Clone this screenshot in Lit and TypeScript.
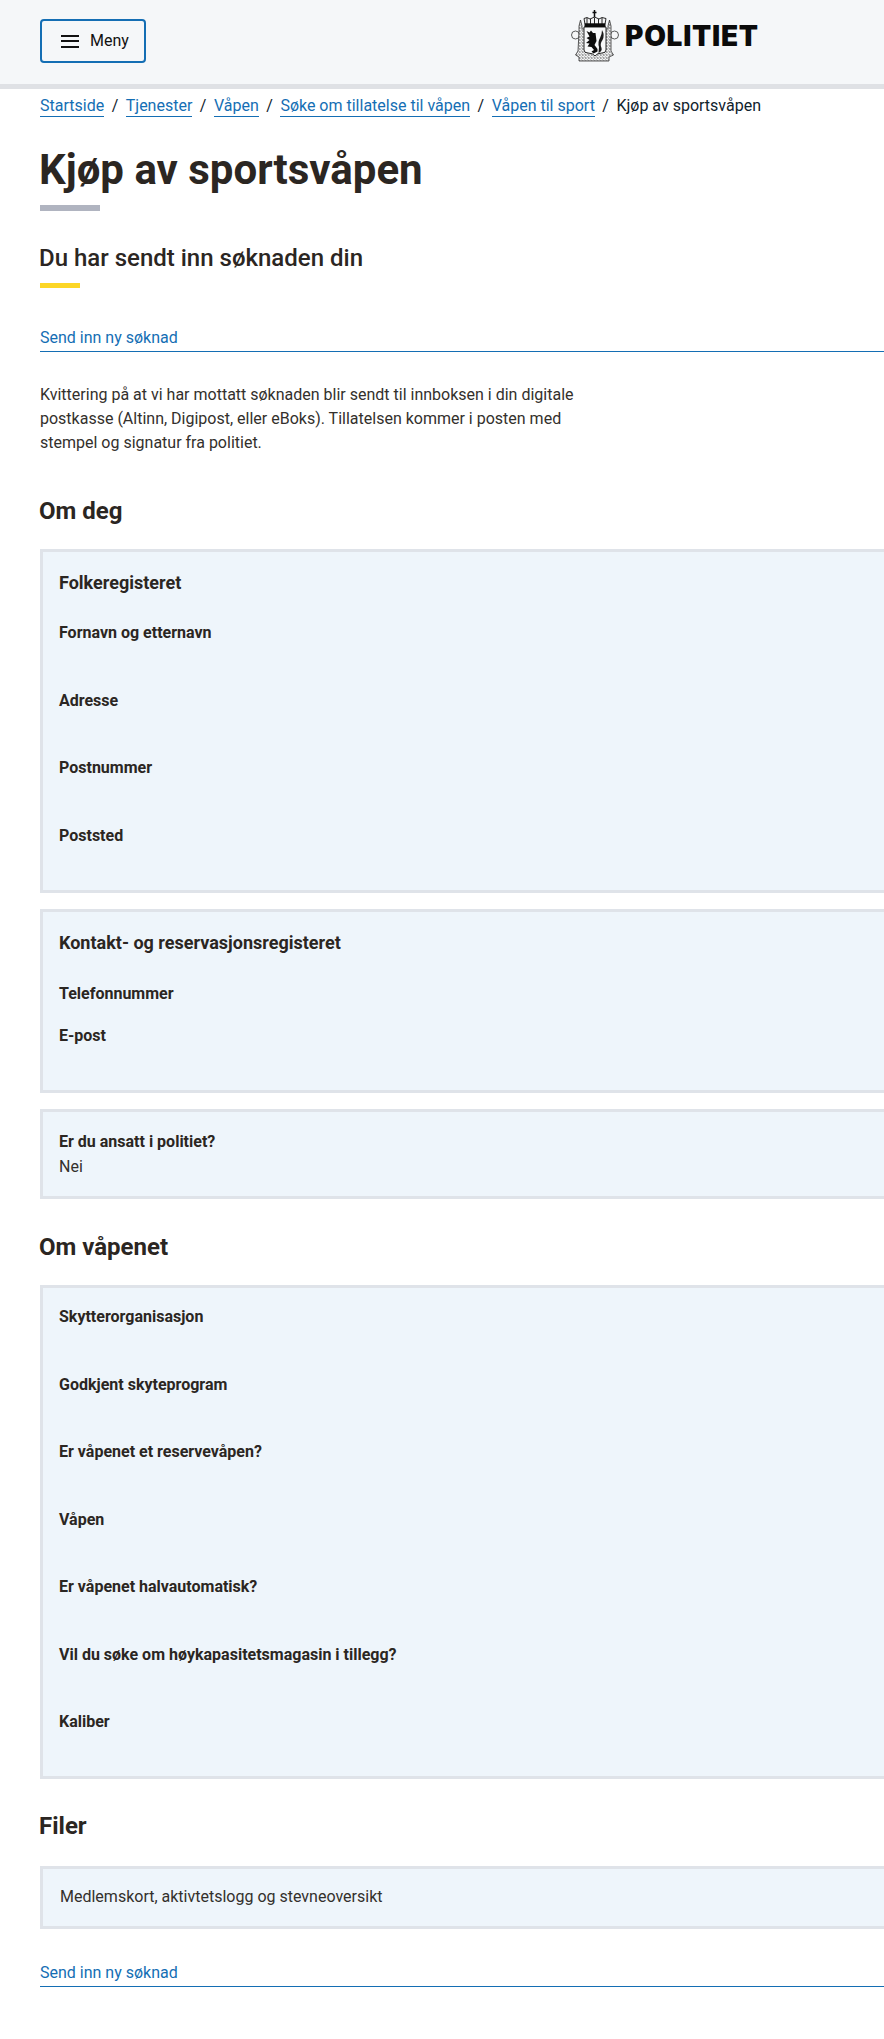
import { LitElement, html, css, svg } from "lit";
import { customElement } from "lit/decorators.js";

const crest = svg`<svg class="crest" viewBox="0 0 60 62" width="60" height="62" aria-hidden="true">
  <defs>
    <pattern id="lace" width="3" height="3" patternUnits="userSpaceOnUse">
      <rect width="3" height="3" fill="#f0f1f2"/>
      <path d="M0 1.5 Q0.8 0 1.5 1.5 T3 1.5 M1.5 3 V2.2" stroke="#444" stroke-width="0.55" fill="none"/>
    </pattern>
  </defs>
  <circle cx="9.5" cy="30" r="4" fill="#f6f7f8" stroke="#333" stroke-width="0.8"/>
  <circle cx="48.5" cy="30" r="4" fill="#f6f7f8" stroke="#333" stroke-width="0.8"/>
  <path d="M13 27 L13 21 L14.5 15 L16 21 L16 24 L42 24 L42 21 L43.5 15 L45 21 L45 27 L45 46 L47.5 50 L43 52 L43 56 L13 56 L13 52 L9.5 50 L12 46 Z" fill="url(#lace)" stroke="#333" stroke-width="0.8"/>
  <path d="M18 22 H40 V45 Q40 48 36 48 Q31 48 29 51 Q27 48 22 48 Q18 48 18 45 Z" fill="#f8f9fa" stroke="#111" stroke-width="0.9"/>
  <path d="M20.5 26 L23.5 27.5 L25 25.5 L27 28 L29.5 28 L30.5 36 L28.5 40 L31.5 44 L31.5 46.5 L27.5 48.5 L25.5 46.5 L28 45 L25.5 42 L21.5 41.5 L23.5 38.5 L20 38 L23.5 35 L20.5 33 L23.5 31.5 Z" fill="#0c0c0c"/>
  <path d="M36 25 Q39 30 36.5 35 Q33.5 39 35.5 43 Q36.5 46 32.5 48 L33 42 Q31.5 37 34 33 Q36 29 36 25 Z" fill="#1a1a1a"/>
  <path d="M18 13.5 L21 12.5 L24 14 L28.5 12 L33 14 L36 12.5 L40 13.5 L39 19 L19 19 Z" fill="#f2f3f4" stroke="#111" stroke-width="0.9"/>
  <path d="M18.5 18.5 H39.5 V22 H18.5 Z" fill="#0c0c0c"/>
  <path d="M21 13 V19 M24.5 14 V19 M28.5 12.5 V19 M32.5 14 V19 M36 13 V19" stroke="#111" stroke-width="0.9"/>
  <path d="M28.5 5 V12 M26.5 7.5 H30.5" stroke="#0c0c0c" stroke-width="1.5"/>
</svg>`;

@customElement("app-root")
export class AppRoot extends LitElement {
  static styles = css`
    :host { display: block; overflow: hidden; font-family: Roboto, "Liberation Sans", sans-serif; color: #33302c; background: #fff; min-height: 2039px; font-size: 16px; line-height: 24px; }
    * { box-sizing: border-box; }
    header { height: 89px; background: #f5f7f9; border-bottom: 5px solid #dfe1e5; padding: 19px 40px 0; display: flex; }
    .menu { width: 106px; height: 44px; border: 2px solid #146eb4; border-radius: 4px; display: flex; align-items: center; padding-left: 19px; gap: 11px; color: #111; font-size: 16px; }
    .burger { width: 18px; height: 13px; border-top: 2px solid #111; border-bottom: 2px solid #111; position: relative; }
    .burger::after { content: ""; position: absolute; left: 0; right: 0; top: 3.5px; height: 2px; background: #111; }
    .logo { display: flex; align-items: center; gap: 0; margin-left: 420px; margin-top: -14px; height: 62px; }
    .crest { flex: none; }
    .wordmark { font-family: Inter, Roboto, sans-serif; font-weight: 900; font-size: 28px; letter-spacing: 0.75px; color: #0b0b0b; line-height: 30px; margin-left: -1px; }
    main { width: 900px; padding: 7px 0 0 40px; }
    .crumbs { display: flex; align-items: flex-start; height: 24px; white-space: nowrap; color: #10222c; line-height: 20px; }
    .crumbs a { color: #146eb4; text-decoration: none; border-bottom: 1px solid #146eb4; line-height: 20px; height: 21px; }
    .crumbs span.sep { margin: 0 7.5px; }
    h1 { margin: 25px 0 0 -1px; font-size: 42px; line-height: 50px; font-weight: 700; color: #2b2622; }
    .bar1 { width: 60px; height: 6px; background: #b0b4c0; margin-top: 10px; }
    h2 { color: #2b2622; }
    h2.sent { margin: 31px 0 0 -1px; font-size: 24px; line-height: 32px; font-weight: 500; }
    .bar2 { width: 40px; height: 5px; background: #fcd626; margin-top: 9px; }
    .newlink { display: block; color: #146eb4; border-bottom: 1px solid #146eb4; text-decoration: none; height: 26px; line-height: 24px; }
    .first { margin-top: 38px; }
    p { margin: 31px 0 0; width: 540px; }
    h2.sec { margin: 0 0 0 -1px; font-size: 24px; line-height: 32px; font-weight: 700; }
    .card { background: #eef5fb; border: 3px solid #dfe3e9; padding: 17px 16px 0; }
    h3 { margin: 0; font-size: 18px; line-height: 24px; font-weight: 700; color: #2b2622; }
    .label { font-weight: 700; line-height: 24px; color: #2b2622; }
    .row { height: 67.5px; }
    .row.short { height: 42px; }
    .c1 { margin-top: 22px; height: 344px; padding-top: 19px; }
    .c1 h3 { margin-bottom: 26px; }
    .c2 { margin-top: 16px; height: 184px; padding-top: 19px; }
    .c2 h3 { margin-bottom: 27px; }
    .c3 { margin-top: 16px; height: 90px; padding-top: 18px; }
    .nei { margin-top: 1px; }
    .c4 { margin-top: 22px; height: 494px; }
    .c5 { margin-top: 24px; height: 63px; padding: 16px 17px 0; }
    h2.sec1 { margin-top: 40px; }
    h2.sec2 { margin-top: 32px; }
    h2.sec3 { margin-top: 31px; }
    .last { margin-top: 32px; }
  `;

  row(label: string, cls = "row") {
    return html`<div class=${cls}><div class="label">${label}</div></div>`;
  }

  render() {
    return html`
      <header>
        <div class="menu"><span class="burger"></span><span>Meny</span></div>
        <div class="logo">${crest}<span class="wordmark">POLITIET</span></div>
      </header>
      <main>
        <nav class="crumbs">
          <a>Startside</a><span class="sep">/</span><a>Tjenester</a><span class="sep">/</span><a>Våpen</a><span class="sep">/</span><a>Søke om tillatelse til våpen</a><span class="sep">/</span><a>Våpen til sport</a><span class="sep">/</span><span>Kjøp av sportsvåpen</span>
        </nav>
        <h1>Kjøp av sportsvåpen</h1>
        <div class="bar1"></div>
        <h2 class="sent">Du har sendt inn søknaden din</h2>
        <div class="bar2"></div>
        <a class="newlink first">Send inn ny søknad</a>
        <p>Kvittering på at vi har mottatt søknaden blir sendt til innboksen i din digitale postkasse (Altinn, Digipost, eller eBoks). Tillatelsen kommer i posten med stempel og signatur fra politiet.</p>
        <h2 class="sec sec1">Om deg</h2>
        <section class="card c1">
          <h3>Folkeregisteret</h3>
          ${["Fornavn og etternavn", "Adresse", "Postnummer", "Poststed"].map((l) => this.row(l))}
        </section>
        <section class="card c2">
          <h3>Kontakt- og reservasjonsregisteret</h3>
          ${this.row("Telefonnummer", "row short")}
          ${this.row("E-post", "row short")}
        </section>
        <section class="card c3">
          <div class="label">Er du ansatt i politiet?</div>
          <div class="nei">Nei</div>
        </section>
        <h2 class="sec sec2">Om våpenet</h2>
        <section class="card c4">
          ${["Skytterorganisasjon", "Godkjent skyteprogram", "Er våpenet et reservevåpen?", "Våpen", "Er våpenet halvautomatisk?", "Vil du søke om høykapasitetsmagasin i tillegg?", "Kaliber"].map((l) => this.row(l))}
        </section>
        <h2 class="sec sec3">Filer</h2>
        <section class="card c5">Medlemskort, aktivtetslogg og stevneoversikt</section>
        <a class="newlink last">Send inn ny søknad</a>
      </main>
    `;
  }
}
